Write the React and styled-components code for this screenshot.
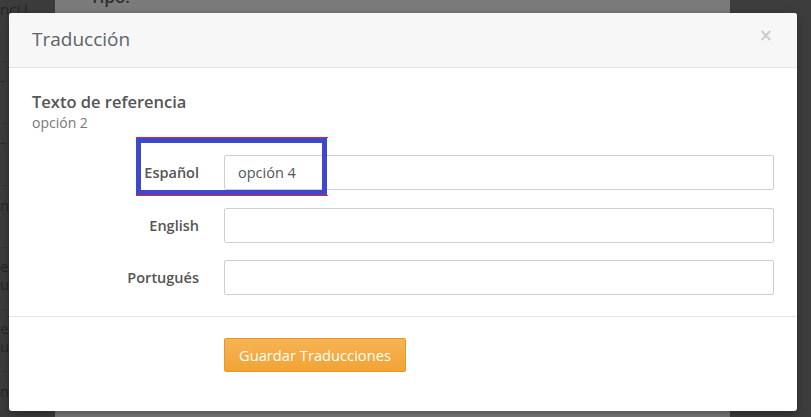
import React from "react";
import styled, { createGlobalStyle } from "styled-components";

const Global = createGlobalStyle`
  html, body { margin: 0; padding: 0; }
  body {
    width: 811px; height: 417px; overflow: hidden;
    font-family: "Open Sans", "Noto Sans", sans-serif;
  }
`;

const Backdrop = styled.div`
  position: relative;
  width: 811px;
  height: 417px;
  display: grid;
  grid-template-columns: 55px 1fr 81px;
  overflow: hidden;
`;

const SideColumn = styled.div`
  background: #3c3c3c;
  display: flex;
  flex-direction: column;
`;

const SideRow = styled.div`
  height: 62px;
  border-bottom: 1px solid #343434;
  color: #262626;
  font-size: 15px;
  line-height: 18px;
  padding-top: ${(p) => p.$pad}px;
  box-sizing: border-box;
  white-space: pre;
  overflow: hidden;
`;

const MainColumn = styled.div`
  background: #7b7b7b;
  padding-left: 35px;
`;

const PageHeading = styled.div`
  margin-top: -13px;
  color: #2e2e2e;
  font-size: 17px;
  font-weight: 600;
  line-height: 20px;
`;

const RightColumn = styled.div`
  background: #3d3d3d;
`;

const Modal = styled.div`
  position: absolute;
  left: 9px;
  top: 13px;
  width: 788px;
  height: 398px;
  background: #fff;
  border-radius: 3px;
  box-shadow: 0 3px 9px rgba(0, 0, 0, 0.35);
  overflow: hidden;
  display: flex;
  flex-direction: column;
`;

const ModalHeader = styled.div`
  height: 54px;
  box-sizing: content-box;
  background: #f7f7f7;
  border-bottom: 1px solid #e5e5e5;
  display: flex;
  align-items: center;
  justify-content: space-between;
  padding: 0 24px 0 23px;
`;

const Title = styled.h4`
  margin: 0;
  margin-top: -2px;
  font-size: 19px;
  font-weight: 400;
  color: #5d646b;
  line-height: 24px;
`;

const Close = styled.button`
  align-self: flex-start;
  margin-top: 15px;
  border: none;
  background: transparent;
  padding: 0;
  color: #cdcdcd;
  font-family: "DejaVu Sans", sans-serif;
  font-size: 17px;
  font-weight: 700;
  line-height: 14px;
  cursor: pointer;
`;

const ModalBody = styled.div`
  position: relative;
  padding: 23px 23px 21px 23px;
  border-bottom: 1px solid #e5e5e5;
`;

const RefTitle = styled.div`
  font-size: 16.5px;
  font-weight: 600;
  color: #555;
  line-height: 22px;
`;

const RefValue = styled.div`
  font-size: 14px;
  color: #777;
  line-height: 19px;
`;

const Form = styled.div`
  margin-top: 23px;
  display: grid;
  grid-template-columns: 167px 550px;
  column-gap: 25px;
  row-gap: 17.5px;
  align-items: center;
`;

const Label = styled.label`
  text-align: right;
  font-size: 14.5px;
  font-weight: 600;
  color: #555;
`;

const Input = styled.input`
  box-sizing: border-box;
  height: 35px;
  width: 100%;
  border: 1px solid #cfcfcf;
  border-radius: 2px;
  padding: 0 13px;
  font-family: "Open Sans", sans-serif;
  font-size: 14.5px;
  color: #555;
  outline: none;
`;

const Highlight = styled.div`
  position: absolute;
  left: 127px;
  top: 69px;
  width: 192px;
  height: 59px;
  box-sizing: border-box;
  border-top: 1px solid #e0262a;
  border-bottom: 1px solid #e0262a;
  pointer-events: none;
`;

const HighlightRing = styled.div`
  width: 191px;
  height: 57px;
  box-sizing: border-box;
  border: 5px solid #3f48cc;
`;

const ModalFooter = styled.div`
  padding: 21px 23px 0 215px;
`;

const PrimaryButton = styled.button`
  height: 34px;
  padding: 0 14px;
  border: 1px solid #e9981f;
  border-radius: 2px;
  background: linear-gradient(#f6b455, #f2a334);
  color: #fff;
  font-family: "Open Sans", sans-serif;
  font-size: 14.7px;
  line-height: 20px;
  cursor: pointer;
`;

const sideRows = [
  { t: "nci.l", pad: -2 },
  { t: "-", pad: 9 },
  { t: "-", pad: 9 },
  { t: "no", pad: 10 },
  { t: "er\nus", pad: 9 },
  { t: "er\nus", pad: 9 },
  { t: "no", pad: 10 },
];

const languages = [
  { label: "Español", value: "opción 4" },
  { label: "English", value: "" },
  { label: "Portugués", value: "" },
];

export default function App() {
  return (
    <>
      <Global />
      <Backdrop>
        <SideColumn>
          {sideRows.map((r, i) => (
            <SideRow key={i} $pad={r.pad}>
              {r.t}
            </SideRow>
          ))}
        </SideColumn>
        <MainColumn>
          <PageHeading>Tipo.</PageHeading>
        </MainColumn>
        <RightColumn />
        <Modal>
          <ModalHeader>
            <Title>Traducción</Title>
            <Close aria-label="Cerrar">×</Close>
          </ModalHeader>
          <ModalBody>
            <RefTitle>Texto de referencia</RefTitle>
            <RefValue>opción 2</RefValue>
            <Form>
              {languages.map((l) => (
                <React.Fragment key={l.label}>
                  <Label>{l.label}</Label>
                  <Input defaultValue={l.value} />
                </React.Fragment>
              ))}
            </Form>
            <Highlight>
              <HighlightRing />
            </Highlight>
          </ModalBody>
          <ModalFooter>
            <PrimaryButton>Guardar Traducciones</PrimaryButton>
          </ModalFooter>
        </Modal>
      </Backdrop>
    </>
  );
}
